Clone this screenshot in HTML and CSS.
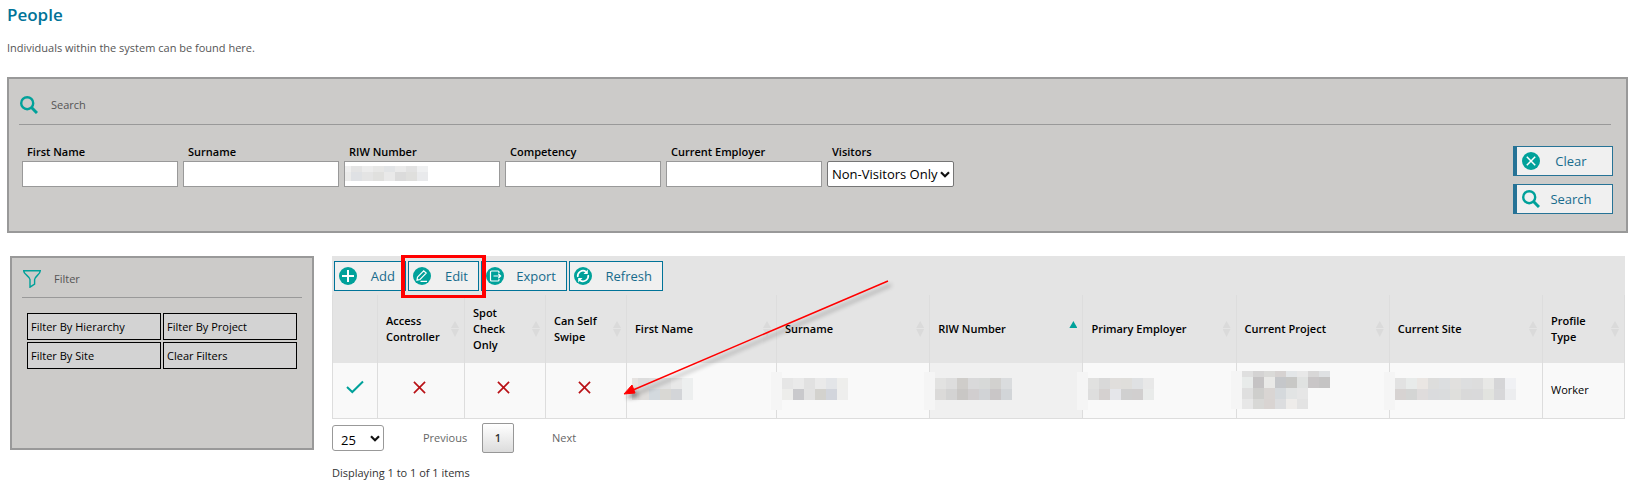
FILE: index.html
```
<!DOCTYPE html>
<html lang="en">
<head>
    <meta charset="UTF-8">
    <meta name="viewport" content="width=device-width, initial-scale=1.0">
    <title>People</title>
    <link rel="stylesheet" href="styles.css">
</head>
<body>
    <h1>People</h1>
    <p class="intro">Individuals within the system can be found here.</p>

    <form class="panel search-panel">
        <div class="panel-title">
            <svg class="icon" viewBox="0 0 18 18"><circle cx="7.2" cy="7.2" r="6" fill="none" stroke="#00a19a" stroke-width="2.4"/><path d="M11.5 11.5L17 17" stroke="#00a19a" stroke-width="3"/></svg>
            <span>Search</span>
        </div>
        <div class="search-body">
            <div class="fields">
                <div class="field"><label for="first">First Name</label><input type="text" id="first"></div>
                <div class="field"><label for="surname">Surname</label><input type="text" id="surname"></div>
                <div class="field masked">
                    <label for="riw">RIW Number</label><input type="text" id="riw">
                    <span class="mosaic in-input" data-cols="8" data-cells="efefef e4e4e4 ececec e7e7e6 e2e4e6 eaeaea e2e2e2 eff0f1 ebebea dfe1e4 e4e4e4 e0e0de e9e9e9 dbdbdb dfdfdd e9eaec"></span>
                </div>
                <div class="field"><label for="competency">Competency</label><input type="text" id="competency"></div>
                <div class="field"><label for="employer">Current Employer</label><input type="text" id="employer"></div>
                <div class="field"><label for="visitors">Visitors</label>
                    <div class="select-box visitors">
                        <select id="visitors"><option>Non-Visitors Only</option></select>
                        <svg class="chevron" viewBox="0 0 10 7"><path d="M1 1.2L5 5.2L9 1.2" fill="none" stroke="#111" stroke-width="2.2"/></svg>
                    </div>
                </div>
            </div>
            <div class="search-actions">
                <button type="reset" class="btn side">
                    <svg class="icon" viewBox="0 0 18 18"><circle cx="9" cy="9" r="9" fill="#00a19a"/><path d="M4.8 4.8L13.2 13.2M13.2 4.8L4.8 13.2" stroke="#fff" stroke-width="1.5"/></svg>
                    <span>Clear</span>
                </button>
                <button type="button" class="btn side">
                    <svg class="icon" viewBox="0 0 18 18"><circle cx="7.2" cy="7.2" r="6" fill="none" stroke="#00a19a" stroke-width="2.4"/><path d="M11.5 11.5L17 17" stroke="#00a19a" stroke-width="3"/></svg>
                    <span>Search</span>
                </button>
            </div>
        </div>
    </form>

    <div class="columns">
        <aside class="panel filter-panel">
            <div class="panel-title">
                <svg class="icon" viewBox="0 0 18 18"><path d="M0.7 0.8H17.3C17.3 4.5 11.6 6.5 11.6 9.5V14.2L7 17.2V9.5C7 6.5 0.7 4.5 0.7 0.8Z" fill="none" stroke="#00a19a" stroke-width="1.4"/></svg>
                <span>Filter</span>
            </div>
            <div class="filter-buttons">
                <button>Filter By Hierarchy</button>
                <button>Filter By Project</button>
                <button>Filter By Site</button>
                <button>Clear Filters</button>
            </div>
        </aside>

        <main class="grid">
            <div class="toolbar">
                <button class="btn add">
                    <svg class="icon" viewBox="0 0 18 18"><circle cx="9" cy="9" r="9" fill="#00a19a"/><path d="M9 3V15M3 9H15" stroke="#fff" stroke-width="2"/></svg>
                    <span>Add</span>
                </button>
                <button class="btn edit">
                    <svg class="icon" viewBox="0 0 18 18"><circle cx="9" cy="9" r="9" fill="#00a19a"/><path d="M4.5 10.2L10.7 3.8L13.2 6.1L7 12.5L4 13.2ZM7.5 14.3H14" fill="none" stroke="#fff" stroke-width="1.2"/></svg>
                    <span>Edit</span>
                </button>
                <button class="btn export">
                    <svg class="icon" viewBox="0 0 18 18"><circle cx="9" cy="9" r="9" fill="#00a19a"/><path d="M13 6V5Q13 4 12 4H5.500Q4.500 4 4.500 5V13Q4.500 14 5.500 14H12Q13 14 13 13V12M7.500 9H14.500M12.300 6.800L14.600 9L12.300 11.200" fill="none" stroke="#fff" stroke-width="1.2"/></svg>
                    <span>Export</span>
                </button>
                <button class="btn refresh">
                    <svg class="icon" viewBox="0 0 18 18"><circle cx="9" cy="9" r="9" fill="#00a19a"/><path d="M3.8 10A5.3 5.3 0 0 1 12 4.7M14.2 8A5.3 5.3 0 0 1 6 13.3" fill="none" stroke="#fff" stroke-width="1.7"/><path d="M13.8 2.5V7H9.5ZM4.2 15.5V11H8.5Z" fill="#fff"/></svg>
                    <span>Refresh</span>
                </button>
            </div>

            <table>
                <colgroup>
                    <col class="c-status"><col class="c-access"><col class="c-flag"><col class="c-flag"><col class="c-first"><col class="c-wide"><col class="c-wide"><col class="c-wide"><col class="c-wide"><col class="c-wide"><col class="c-type">
                </colgroup>
                <thead>
                    <tr>
                        <th></th>
                        <th><div class="head"><span>Access Controller</span><i class="sort"></i></div></th>
                        <th><div class="head"><span>Spot Check Only</span><i class="sort"></i></div></th>
                        <th><div class="head"><span>Can Self Swipe</span><i class="sort"></i></div></th>
                        <th><div class="head"><span>First Name</span><i class="sort"></i></div></th>
                        <th><div class="head"><span>Surname</span><i class="sort"></i></div></th>
                        <th><div class="head"><span>RIW Number</span><i class="sort asc"></i></div></th>
                        <th><div class="head"><span>Primary Employer</span><i class="sort"></i></div></th>
                        <th><div class="head"><span>Current Project</span><i class="sort"></i></div></th>
                        <th><div class="head"><span>Current Site</span><i class="sort"></i></div></th>
                        <th><div class="head"><span>Profile Type</span><i class="sort"></i></div></th>
                    </tr>
                </thead>
                <tbody>
                    <tr>
                        <td class="mark"><svg class="tick" viewBox="0 0 18 14"><path d="M1 7L6.3 12L17 1.5" fill="none" stroke="#00a19a" stroke-width="2"/></svg></td>
                        <td class="mark flag"><svg class="cross" viewBox="0 0 14 14"><path d="M1 1L13 13M13 1L1 13" stroke="#b91116" stroke-width="1.8"/></svg></td>
                        <td class="mark flag"><svg class="cross" viewBox="0 0 14 14"><path d="M1 1L13 13M13 1L1 13" stroke="#b91116" stroke-width="1.8"/></svg></td>
                        <td class="mark flag"><svg class="cross" viewBox="0 0 14 14"><path d="M1 1L13 13M13 1L1 13" stroke="#b91116" stroke-width="1.8"/></svg></td>
                        <td><span class="mosaic lead" data-cols="6" data-cells="e6e3e1 dddddd dfdfdf e2e2e2 e8e8e8 edefef e6e2e0 dfdddb d3d9de d9d8d4 d3d5d8 edefef"></span></td>
                        <td><span class="mosaic patch" data-cols="6" data-cells="e6e6e6 eaeaea e1e1e1 eaeaea e3e5e8 eeeeec ededeb c9c9cc e2e2e2 d3d2ce d2d5dc eeeeed"></span></td>
                        <td class="sorted"><span class="mosaic patch" data-cols="7" data-cells="e2e2e1 dddddd cfcdca d9d9da d7d9d8 d2d1cf dadcde dbdad9 d3d3d3 c9c7c5 d1cecf d1d3d6 c9c6c7 d2d5d8"></span></td>
                        <td><span class="mosaic patch" data-cols="6" data-cells="e1e1e0 d9d9d9 e0dedc dfdedb dfe1e3 e8e8e8 dedede d5d1d0 e5e6ea d0d0d0 d1cfcf e9ebea"></span></td>
                        <td><span class="mosaic patch tall" data-cols="8" data-cells="dfdfdf d4d3d3 dadad8 d6d2d1 e3e6e8 e8e8e8 d8d7d7 dfe1e3 e8ebea c5c3c4 e9e9e7 c5c7ca c8c8c6 e0e2e1 c9c6c7 c5c4c4 dfdfdf cececc d9d5d3 d5d9dc e2e4e4 e6e6e6 - - e7e7e7 d8d8d6 d9d4d2 dcdddf eeecea e3e3e3 - -"></span></td>
                        <td><span class="mosaic patch" data-cols="11" data-cells="e2e2e2 e8ebea eae6e3 dddddc dcdee0 e1e0de dddedf dddddd e8e8e6 d5d5d7 f0f1f4 d7d3d2 d4d5d4 dfdcdc dadbdd dadcdd dfdfdc d9d9d9 d9d9da e2e3df d7d7d9 ecedef"></span></td>
                        <td class="type">Worker</td>
                    </tr>
                </tbody>
            </table>

            <div class="pager">
                <div class="select-box page-size">
                    <select aria-label="Items per page"><option>25</option></select>
                    <svg class="chevron" viewBox="0 0 10 7"><path d="M1 1.2L5 5.2L9 1.2" fill="none" stroke="#111" stroke-width="2.2"/></svg>
                </div>
                <button class="page prev">Previous</button>
                <button class="page current">1</button>
                <button class="page next">Next</button>
            </div>
            <p class="summary">Displaying 1 to 1 of 1 items</p>

            <div class="highlight"></div>
            <svg class="arrow" viewBox="0 0 276 126">
                <g class="arrow-shape">
                    <path d="M266 3L11 112" stroke="#f00" stroke-width="1.5"/>
                    <path d="M2 116L10 107L13 115Z" fill="#f00" stroke="#f00"/>
                </g>
            </svg>
        </main>
    </div>

    <script>
        document.querySelectorAll(".mosaic").forEach(function (box) {
            box.style.setProperty("--cols", box.dataset.cols);
            box.dataset.cells.split(" ").forEach(function (color) {
                let cell = document.createElement("span");
                if (color !== "-") cell.style.background = "#" + color;
                box.appendChild(cell);
            });
        });
    </script>
</body>
</html>
```
FILE: styles.css
```
* { box-sizing: border-box; }
body { margin: 0; padding: 4px 8px 0 7px; background: #fff; color: #333; font-family: "Open Sans", "Noto Sans", sans-serif; font-size: 11px; line-height: 16px; }
button, input, select { font-family: inherit; margin: 0; }
h1 { margin: 0; font-size: 17px; line-height: 22px; font-weight: 600; color: #007398; }
.intro { margin: 14px 0 21px; color: #555; }

.panel { background: #cccbc9; border: 2px solid #999; }
.panel-title { display: flex; align-items: center; color: #555; border-bottom: 1px solid #999; }
.icon { width: 18px; height: 18px; flex: none; }

.search-panel { padding: 10px 15px 17px 10px; }
.search-panel .panel-title { height: 36px; gap: 13px; padding: 0 0 3px 1px; }
.search-body { display: flex; justify-content: space-between; }
.fields { display: flex; gap: 5px; padding: 19px 0 0 3px; }
.field label { display: block; height: 17px; padding-left: 5px; color: #000; font-size: 11px; font-weight: 600; }
.field input { display: block; width: 156px; height: 26px; border: 1px solid #999; background: #fff; padding: 0 4px; }
.masked { position: relative; }

.select-box { position: relative; }
.select-box select { display: block; width: 100%; height: 26px; appearance: none; background: #fff; border: 1px solid #767676; border-radius: 2px; color: #000; font-size: 13px; padding: 0 0 0 4px; }
.chevron { position: absolute; right: 4px; top: 10px; width: 10px; height: 7px; pointer-events: none; }
.visitors { width: 127px; }

.search-actions { display: flex; flex-direction: column; gap: 8px; padding-top: 21px; margin-right: -2px; }
.btn { display: flex; align-items: center; height: 30px; padding: 0 10px 0 4px; background: #f0f0f0; border: 1px solid #007398; color: #176b8c; font-size: 13px; cursor: pointer; }
.btn:hover { background: #fff; }
.btn span { flex: 1; }
.side { width: 100px; border-color: #267396; border-left-width: 4px; padding-left: 5px; }

.columns { display: flex; gap: 18px; align-items: flex-start; padding: 23px 3px 0; }
.filter-panel { flex: none; width: 304px; height: 194px; padding: 8px 10px; }
.filter-panel .panel-title { height: 32px; gap: 13px; padding: 0 0 5px 1px; }
.filter-buttons { display: grid; grid-template-columns: 1fr 1fr; gap: 2px; padding: 15px 5px 0; }
.filter-buttons button { height: 27px; padding: 0 3px; background: #d3d3d3; border: 1px solid #000; color: #000; font-size: 11px; text-align: left; }

.grid { flex: 1; position: relative; min-width: 0; }
.toolbar { display: flex; gap: 2px; padding: 5px 2px 4px; background: #e4e4e4; }
.add { width: 72px; }
.edit { width: 71px; }
.export { width: 86px; }
.refresh { width: 94px; }
.toolbar .btn span { text-align: right; }

table { width: 100%; table-layout: fixed; border-collapse: collapse; color: #000; }
.c-status { width: 45px; }
.c-access { width: 87px; }
.c-flag { width: 81px; }
.c-first { width: 150px; }
.c-type { width: 82px; }
th, td { border: 1px solid #ddd; padding: 0; }
th { height: 68px; background: #e4e4e4; border-top: 0; border-bottom: 0; font-weight: 600; text-align: left; }
td { height: 55px; background: #f9f9f9; border-top: 0; }
.head { display: flex; align-items: center; justify-content: space-between; gap: 10px; padding: 0 5px 0 8px; }
.sort { flex: none; width: 8px; height: 16px; background: #dadada; clip-path: polygon(50% 0, 100% 7px, 0 7px, 0 8px, 100% 8px, 50% 100%, 0 8px, 0 7px); }
.asc { background: #00a19a; clip-path: polygon(50% 0, 100% 7px, 0 7px); }
.sorted { background: #f0f0f0; }
.mark { text-align: center; }
.mark svg { display: block; margin: 0 auto 6px; }
.flag { padding-right: 3px; }
.tick { width: 18px; height: 14px; }
.cross { width: 13px; height: 13px; }
.type { padding-left: 8px; }

/* hidden personal data */
.mosaic { position: relative; display: grid; width: max-content; grid-template-columns: repeat(var(--cols), 11px); grid-auto-rows: 11px; margin: 0 0 3px 5px; }
.lead { grid-template-columns: 6px repeat(5, 11px); }
.patch::before { content: ""; position: absolute; left: -11px; top: -6px; width: 11px; height: 38px; background: #f5f5f5; }
.tall { grid-template-rows: 6px 11px 11px 10px; margin-bottom: 0; }
.tall::before { top: 0; }
.in-input { position: absolute; left: 1px; top: 22px; margin: 0; grid-template-rows: 6px 9px; grid-template-columns: 6px repeat(7, 11px); }

.pager { display: flex; align-items: center; padding-top: 4px; }
.page-size { width: 52px; }
.page-size select { padding: 4px 0 0 8px; border-color: #999; border-radius: 3px; }
.page { height: 30px; padding: 0; border: 1px solid transparent; background: none; color: #666; font-size: 11px; }
.prev { width: 44px; margin: 0 16px 0 38px; }
.current { width: 32px; border-color: #979797; border-radius: 2px; background: linear-gradient(#fff, #dcdcdc); color: #333; font-weight: 600; }
.next { margin-left: 37px; }
.summary { margin: 12px 0 0; }

.highlight { position: absolute; left: 69px; top: -1px; width: 85px; height: 43px; border: 4px solid #f00; border-width: 3px 4px; pointer-events: none; }
.arrow { position: absolute; left: 290px; top: 22px; width: 276px; height: 126px; pointer-events: none; }
.arrow-shape { filter: drop-shadow(3px 4px 2px rgba(0, 0, 0, 0.4)); }
```
